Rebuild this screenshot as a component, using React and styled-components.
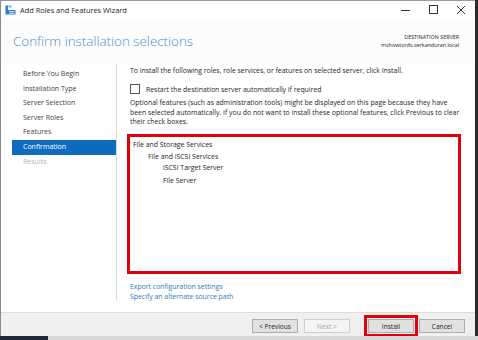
import React from 'react';
import styled, { createGlobalStyle } from 'styled-components';

const COLORS = {
  title: '#4f93c2',
  select: '#0e6bbd',
  link: '#2b7db8',
  text: '#1e1e1e',
  muted: '#b4b4b4',
  red: '#e0000b',
  bar: '#f0f0f0',
};

const GlobalStyle = createGlobalStyle`
  html, body {
    margin: 0;
    padding: 0;
    background: #2b2b2b;
    font-family: "Open Sans", "Noto Sans", sans-serif;
    color: ${COLORS.text};
  }
`;

const Window = styled.div`
  width: 475px;
  height: 336px;
  background: #fff;
  border-left: 1px solid #8a8a8a;
  border-top: 1px solid #9a9a9a;
  box-sizing: border-box;
  display: flex;
  flex-direction: column;
`;

const TitleBar = styled.div`
  height: 18px;
  display: flex;
  align-items: center;
  padding-left: 4px;
  font-size: 7.4px;
`;

const TitleText = styled.span`
  margin-left: 4px;
  flex: 1;
`;

const WinButton = styled.div`
  width: 27.5px;
  height: 18px;
  display: flex;
  align-items: center;
  justify-content: center;
`;

const Header = styled.div`
  height: 45px;
  display: flex;
  align-items: center;
  justify-content: space-between;
  padding: 0 16px 0 12px;
  background: #fcfcfc;
`;

const PageTitle = styled.h1`
  margin: 0;
  font-size: 13.4px;
  font-weight: 300;
  color: ${COLORS.title};
  padding-bottom: 2px;
`;

const Destination = styled.div`
  text-align: right;
  font-size: 5.4px;
  line-height: 8px;
  padding-bottom: 2px;
`;

const Main = styled.div`
  flex: 1;
  display: flex;
  align-items: flex-start;
`;

const Nav = styled.div`
  width: 116px;
  height: 236px;
  border-right: 1px solid #dadada;
  padding-top: 3px;
  box-sizing: border-box;
`;

const NavItem = styled.div`
  margin-left: 11px;
  height: 14.6px;
  line-height: 14.6px;
  padding-left: 11px;
  font-size: 7px;
  background: ${(p) => (p.active ? COLORS.select : 'transparent')};
  color: ${(p) => (p.active ? '#fff' : p.disabled ? COLORS.muted : '#444')};
`;

const Content = styled.div`
  flex: 1;
  padding: 2px 0 0 13px;
  font-size: 6.9px;
`;

const Line = styled.div`
  line-height: 10px;
`;

const CheckRow = styled.label`
  margin-top: 8px;
  display: flex;
  align-items: center;
  height: 10px;
`;

const Box = styled.span`
  width: 8px;
  height: 8px;
  border: 1px solid #555;
  margin-right: 6px;
  background: #fff;
`;

const Note = styled.p`
  margin: 4px 0 0;
  width: 340px;
  line-height: 9.7px;
`;

const ListBox = styled.div`
  margin-top: 10px;
  width: 328px;
  height: 134px;
  box-sizing: border-box;
  background: #fff;
  outline: 3px solid ${COLORS.red};
  padding-top: 2px;
`;

const TreeItem = styled.div`
  line-height: 11.5px;
  padding-left: ${(p) => 3 + p.level * 15}px;
  margin-top: ${(p) => (p.gap ? 1.5 : 0)}px;
`;

const Links = styled.div`
  margin-top: 11px;
  display: flex;
  flex-direction: column;
  align-items: flex-start;
`;

const Link = styled.a`
  line-height: 9.5px;
  color: ${COLORS.link};
  text-decoration: none;
`;

const Footer = styled.div`
  height: 24px;
  box-sizing: border-box;
  border-top: 1px solid #dcdcdc;
  background: ${COLORS.bar};
  display: flex;
  justify-content: flex-end;
  align-items: flex-start;
  padding: 6px 10px 0 0;
`;

const Button = styled.button`
  width: 46px;
  height: 14px;
  padding: 0;
  margin-left: ${(p) => p.gap}px;
  font-family: inherit;
  font-size: 6.6px;
  background: ${(p) => (p.disabled ? '#f4f4f4' : '#e1e1e1')};
  color: ${(p) => (p.disabled ? '#a8a8a8' : '#222')};
  border: 1px solid ${(p) => (p.disabled ? '#cfcfcf' : '#adadad')};
  outline: ${(p) => (p.marked ? `3px solid ${COLORS.red}` : 'none')};
  outline-offset: 1px;
`;

const Taskbar = styled.div`
  height: 4px;
  display: flex;
`;

const TaskDark = styled.div`
  width: 48px;
  background: #1f2a38;
`;

const TaskLight = styled.div`
  flex: 1;
  background: #d8d8d8;
`;

const ServerIcon = () => (
  <svg width="11" height="10" viewBox="0 0 11 10">
    <rect x="0.5" y="0.5" width="2.5" height="9" fill="#2f7fd0" />
    <rect x="3.5" y="0.5" width="3" height="2" fill="#6aaae0" />
    <rect x="3" y="5" width="7.5" height="4.5" fill="#2f7fd0" />
    <rect x="4" y="6" width="5.5" height="1" fill="#cfe4f7" />
    <rect x="4" y="7.8" width="5.5" height="1" fill="#cfe4f7" />
  </svg>
);

const steps = [
  'Before You Begin',
  'Installation Type',
  'Server Selection',
  'Server Roles',
  'Features',
  'Confirmation',
  'Results',
];

const tree = [
  { label: 'File and Storage Services', level: 0 },
  { label: 'File and iSCSI Services', level: 1 },
  { label: 'iSCSI Target Server', level: 2 },
  { label: 'File Server', level: 2, gap: true },
];

export default function App() {
  return (
    <>
      <GlobalStyle />
      <Window>
        <TitleBar>
          <ServerIcon />
          <TitleText>Add Roles and Features Wizard</TitleText>
          <WinButton>
            <svg width="10" height="10" viewBox="0 0 10 10">
              <path d="M0 5.5h9" stroke="#333" strokeWidth="1" />
            </svg>
          </WinButton>
          <WinButton>
            <svg width="10" height="10" viewBox="0 0 10 10">
              <rect x="0.5" y="0.5" width="8" height="8" fill="none" stroke="#333" />
            </svg>
          </WinButton>
          <WinButton>
            <svg width="10" height="10" viewBox="0 0 10 10">
              <path d="M1 1l8 8M9 1l-8 8" stroke="#333" strokeWidth="1" />
            </svg>
          </WinButton>
        </TitleBar>
        <Header>
          <PageTitle>Confirm installation selections</PageTitle>
          <Destination>
            <div>DESTINATION SERVER</div>
            <div>mshowtords.serkanduran.local</div>
          </Destination>
        </Header>
        <Main>
          <Nav>
            {steps.map((s) => (
              <NavItem key={s} active={s === 'Confirmation'} disabled={s === 'Results'}>
                {s}
              </NavItem>
            ))}
          </Nav>
          <Content>
            <Line>
              To install the following roles, role services, or features on selected server, click Install.
            </Line>
            <CheckRow>
              <Box />
              Restart the destination server automatically if required
            </CheckRow>
            <Note>
              Optional features (such as administration tools) might be displayed on this page because they have<br />
              been selected automatically. If you do not want to install these optional features, click Previous to clear<br />
              their check boxes.
            </Note>
            <ListBox>
              {tree.map((t) => (
                <TreeItem key={t.label} level={t.level} gap={t.gap}>
                  {t.label}
                </TreeItem>
              ))}
            </ListBox>
            <Links>
              <Link href="#">Export configuration settings</Link>
              <Link href="#">Specify an alternate source path</Link>
            </Links>
          </Content>
        </Main>
        <Footer>
          <Button gap={0}>&lt; Previous</Button>
          <Button gap={6} disabled>Next &gt;</Button>
          <Button gap={18} marked>Install</Button>
          <Button gap={5}>Cancel</Button>
        </Footer>
      </Window>
      <Taskbar>
        <TaskDark />
        <TaskLight />
      </Taskbar>
    </>
  );
}
